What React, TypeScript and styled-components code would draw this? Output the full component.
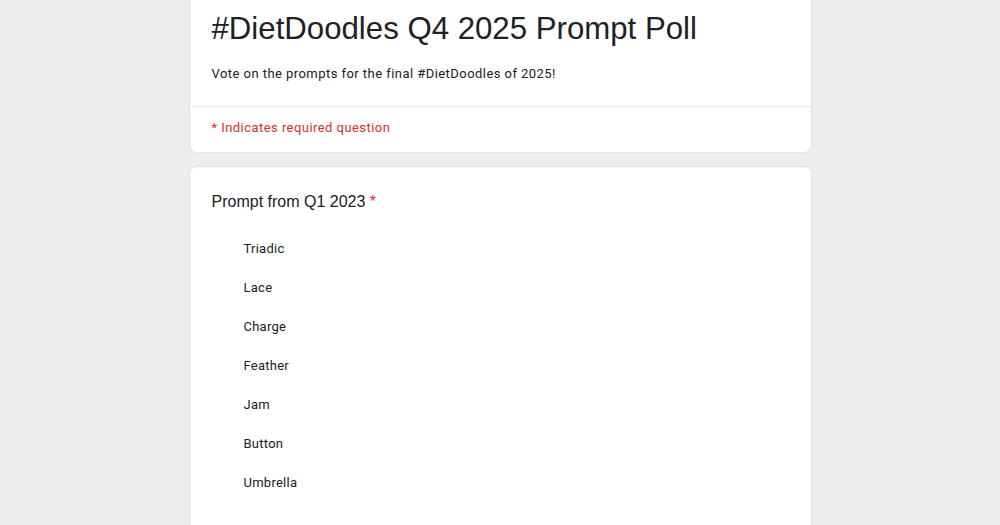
import { ReactElement } from 'react';
import styled, { createGlobalStyle } from 'styled-components';

const GlobalStyle = createGlobalStyle`
    html, body {
        margin: 0;
        padding: 0;
        background-color: #ededed;
    }
`;

const Page = styled.div`
    display: flex;
    flex-direction: column;
    align-items: center;
    gap: 13px;
    height: 525px;
    overflow: hidden;
`;

const Card = styled.div<{ $top?: boolean }>`
    width: 623px;
    box-sizing: border-box;
    background-color: #fff;
    border: 1px solid #e2e2e2;
    border-radius: ${(p) => (p.$top ? '0 0 8px 8px' : '8px')};
    border-top: ${(p) => (p.$top ? 'none' : '1px solid #e2e2e2')};
    flex-shrink: 0;
`;

const TitleBlock = styled.div`
    padding: 9px 22px 22px 22px;
    border-bottom: 1px solid #e6e6e6;
`;

const Title = styled.h1`
    margin: 0;
    font-family: 'Liberation Sans', Arial, sans-serif;
    font-weight: 400;
    font-size: 31.2px;
    line-height: 40px;
    color: #202124;
`;

const Description = styled.p`
    margin: 15px 0 0 0;
    font-family: Roboto, 'Liberation Sans', sans-serif;
    font-size: 13px;
    line-height: 20px;
    letter-spacing: 0.45px;
    color: #202124;
`;

const Required = styled.div`
    padding: 11px 22px 14px 22px;
    font-family: Roboto, 'Liberation Sans', sans-serif;
    font-size: 13px;
    line-height: 20px;
    letter-spacing: 0.45px;
    color: #d93025;
`;

const QuestionBody = styled.div`
    padding: 23px 22px 40px 22px;
`;

const QuestionTitle = styled.div`
    font-family: 'Liberation Sans', Arial, sans-serif;
    font-size: 16px;
    line-height: 24px;
    color: #202124;
`;

const Star = styled.span`
    color: #d93025;
`;

const OptionList = styled.ul`
    list-style: none;
    margin: 25px 0 0 0;
    padding: 0 0 0 32px;
    display: flex;
    flex-direction: column;
    gap: 19px;
`;

const Option = styled.li`
    font-family: Roboto, 'Liberation Sans', sans-serif;
    font-size: 13px;
    line-height: 20px;
    letter-spacing: 0.25px;
    color: #202124;
`;

const options = ['Triadic', 'Lace', 'Charge', 'Feather', 'Jam', 'Button', 'Umbrella'];

function App(): ReactElement {
    return (
        <>
            <GlobalStyle />
            <Page>
                <Card $top>
                    <TitleBlock>
                        <Title>#DietDoodles Q4 2025 Prompt Poll</Title>
                        <Description>Vote on the prompts for the final #DietDoodles of 2025!</Description>
                    </TitleBlock>
                    <Required>* Indicates required question</Required>
                </Card>
                <Card>
                    <QuestionBody>
                        <QuestionTitle>
                            Prompt from Q1 2023 <Star>*</Star>
                        </QuestionTitle>
                        <OptionList>
                            {options.map((o) => (
                                <Option key={o}>{o}</Option>
                            ))}
                        </OptionList>
                    </QuestionBody>
                </Card>
            </Page>
        </>
    );
}

export default App;
